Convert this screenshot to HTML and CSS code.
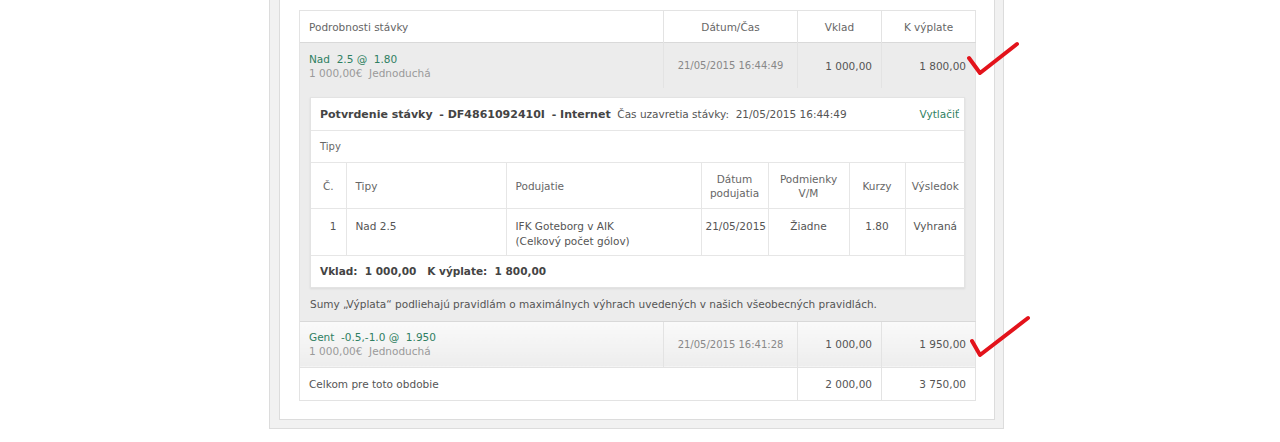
FILE: index.html
```html
<!DOCTYPE html>
<html lang="sk">
  <head>
    <meta charset="UTF-8" />
    <title>História stávok</title>
    <link rel="stylesheet" href="styles.css">
  </head>
  <body>
    <div class="frame">
      <div class="panel">
        <table class="bets">
          <colgroup>
            <col class="c-detail" />
            <col class="c-date" />
            <col class="c-stake" />
            <col class="c-pay" />
          </colgroup>
          <thead>
            <tr>
              <th class="left">Podrobnosti stávky</th>
              <th>Dátum/Čas</th>
              <th>Vklad</th>
              <th>K výplate</th>
            </tr>
          </thead>
          <tbody>
            <tr class="bet open">
              <td>
                <div class="pick">Nad&nbsp; 2.5 @&nbsp; 1.80</div>
                <div class="sub">1 000,00€&nbsp; Jednoduchá</div>
              </td>
              <td class="date">21/05/2015 16:44:49</td>
              <td class="num">1 000,00</td>
              <td class="num">1 800,00</td>
            </tr>
            <tr class="details">
              <td colspan="4">
                <div class="card">
                  <div class="card-head">
                    <div>
                      <b>Potvrdenie stávky</b>&nbsp; <b>- DF4861092410I</b>&nbsp; <b>- Internet</b>&nbsp;
                      Čas uzavretia stávky:&nbsp; 21/05/2015 16:44:49
                    </div>
                    <a class="print">Vytlačiť</a>
                  </div>
                  <div class="card-label">Tipy</div>
                  <table class="tips">
                    <colgroup>
                      <col class="t-no" />
                      <col class="t-tip" />
                      <col class="t-event" />
                      <col class="t-date" />
                      <col class="t-cond" />
                      <col class="t-odds" />
                      <col class="t-res" />
                    </colgroup>
                    <thead>
                      <tr>
                        <th>Č.</th>
                        <th class="left">Tipy</th>
                        <th class="left">Podujatie</th>
                        <th>Dátum<br />podujatia</th>
                        <th>Podmienky<br />V/M</th>
                        <th>Kurzy</th>
                        <th>Výsledok</th>
                      </tr>
                    </thead>
                    <tbody>
                      <tr>
                        <td class="num">1</td>
                        <td>Nad 2.5</td>
                        <td>IFK Goteborg v AIK<br />(Celkový počet gólov)</td>
                        <td class="mid">21/05/2015</td>
                        <td class="mid">Žiadne</td>
                        <td class="mid">1.80</td>
                        <td class="mid">Vyhraná</td>
                      </tr>
                    </tbody>
                  </table>
                  <div class="card-foot">
                    Vklad:&nbsp; 1 000,00&nbsp;&nbsp; K výplate:&nbsp; 1 800,00
                  </div>
                </div>
                <p class="note">Sumy „Výplata“ podliehajú pravidlám o maximálnych výhrach uvedených v našich všeobecných pravidlách.</p>
              </td>
            </tr>
            <tr class="bet">
              <td>
                <div class="pick">Gent&nbsp; -0.5,-1.0 @&nbsp; 1.950</div>
                <div class="sub">1 000,00€&nbsp; Jednoduchá</div>
              </td>
              <td class="date">21/05/2015 16:41:28</td>
              <td class="num">1 000,00</td>
              <td class="num">1 950,00</td>
            </tr>
            <tr class="total">
              <td colspan="2">Celkom pre toto obdobie</td>
              <td class="num">2 000,00</td>
              <td class="num">3 750,00</td>
            </tr>
          </tbody>
        </table>
      </div>
    </div>

    <!-- hand drawn ticks over the page -->
    <svg class="tick tick-1" width="64" height="42" viewBox="962 38 64 42">
      <path d="M969 58 L980 73 L1017 44" />
    </svg>
    <svg class="tick tick-2" width="66" height="46" viewBox="966 313 66 46">
      <path d="M972 341 L980 355 L1028 318" />
    </svg>
  </body>
</html>
```

FILE: styles.css
```css
body {
  margin: 0;
  background: #fff;
  font-family: "DejaVu Sans", Verdana, sans-serif;
  font-size: 10.5px;
  color: #555;
  position: relative;
  height: 442px;
  overflow: hidden;
}
.frame {
  width: 716px;
  margin: -20px 0 0 269px;
  padding: 9px 8px 8px 9px;
  background: #f1f1f1;
  border: 1px solid #dcdcdc;
}
.panel {
  background: #fff;
  border: 1px solid #dcdcdc;
  padding: 19px 19px 18px 19px;
}
table {
  border-collapse: collapse;
  table-layout: fixed;
}
.bets {
  width: 676px;
  border: 1px solid #e3e3e3;
}
.c-detail {
  width: 364px;
}
.c-date {
  width: 134px;
}
.c-stake {
  width: 84px;
}
.c-pay {
  width: 94px;
}
.bets th {
  height: 31px;
  padding: 0 9px;
  font-weight: normal;
  color: #666;
  text-align: center;
  border-left: 1px solid #e3e3e3;
}
th.left {
  text-align: left;
}
.bets td {
  padding: 0 9px;
  border-left: 1px solid #e3e3e3;
}
.bet td {
  height: 45px;
  border-top: 1px solid #d9d9d9;
  background: linear-gradient(#fafafa, #ededed);
}
.bet.open td {
  background: #ececec;
}
.pick {
  color: #2f7f62;
  line-height: 14px;
}
.sub {
  color: #9a9a9a;
  line-height: 14px;
}
.date {
  text-align: center;
  color: #888;
  font-size: 10px;
  white-space: nowrap;
}
.num {
  text-align: right;
}
.details > td {
  background: #ececec;
  padding: 9px 10px 0 10px;
}
.card {
  background: #fff;
  border: 1px solid #e3e3e3;
  box-shadow: 0 1px 2px rgba(0, 0, 0, 0.08);
}
.card-head {
  display: flex;
  justify-content: space-between;
  align-items: center;
  height: 32px;
  padding: 0 5px 0 9px;
  font-size: 10.5px;
  color: #555;
  white-space: nowrap;
}
.card-head b {
  color: #444;
  font-size: 11px;
}
.print {
  color: #2f7f62;
}
.card-label {
  height: 31px;
  line-height: 31px;
  padding: 0 9px;
  border-top: 1px solid #e6e6e6;
  font-size: 10px;
  color: #666;
}
.tips {
  width: 100%;
}
.t-no {
  width: 35px;
}
.t-tip {
  width: 160px;
}
.t-event {
  width: 195px;
}
.t-date {
  width: 67px;
}
.t-cond {
  width: 81px;
}
.t-odds {
  width: 56px;
}
.t-res {
  width: 60px;
}
.tips th {
  height: 45px;
  padding: 0 6px;
  font-weight: normal;
  color: #666;
  line-height: 14px;
  border: 1px solid #e6e6e6;
}
.tips th.left {
  padding: 0 9px;
}
.tips th:first-child,
.tips td:first-child {
  border-left: none;
}
.tips th:last-child,
.tips td:last-child {
  border-right: none;
}
.tips td {
  height: 46px;
  padding: 10px 9px 0 9px;
  vertical-align: top;
  line-height: 15px;
  border-left: 1px solid #e6e6e6;
  border-right: 1px solid #e6e6e6;
  box-sizing: border-box;
}
.tips td.mid {
  text-align: center;
  padding: 10px 4px 0 4px;
}
.card-foot {
  height: 31px;
  line-height: 31px;
  padding: 0 9px;
  border-top: 1px solid #e6e6e6;
  font-weight: bold;
  color: #444;
}
.note {
  margin: 0;
  height: 33px;
  line-height: 33px;
  color: #555;
}
.total td {
  height: 32px;
  border-top: 1px solid #e3e3e3;
  background: #fff;
}
.tick {
  position: absolute;
  fill: none;
  stroke: #e3131b;
  stroke-width: 4;
  stroke-linecap: round;
  stroke-linejoin: round;
}
.tick-1 {
  left: 962px;
  top: 38px;
}
.tick-2 {
  left: 966px;
  top: 313px;
}
```
